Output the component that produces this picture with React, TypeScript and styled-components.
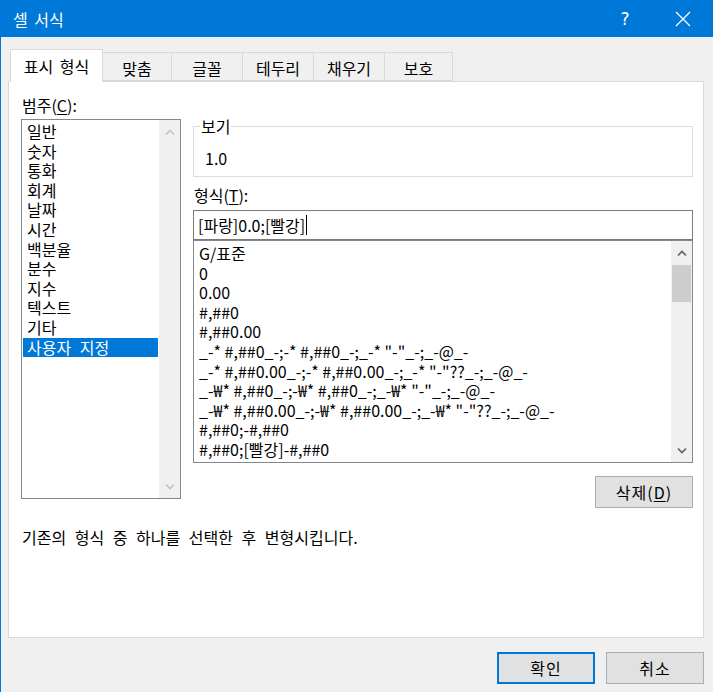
import * as React from 'react';
import styled, { createGlobalStyle } from 'styled-components';

const GlobalStyle = createGlobalStyle`
  html, body {
    margin: 0;
    padding: 0;
    background: #f0f0f0;
  }
  body {
    font-family: "Noto Sans CJK KR", "Noto Sans", sans-serif;
    font-size: 16px;
    color: #000;
  }
`;

const Window = styled.div`
  width: 713px;
  height: 692px;
  box-sizing: border-box;
  display: flex;
  flex-direction: column;
  background: #f0f0f0;
  border-left: 1px solid #0078d7;
  overflow: hidden;
`;

const TitleBar = styled.div`
  height: 37px;
  flex: 0 0 37px;
  display: flex;
  align-items: center;
  background: #0078d7;
  color: #fff;
  padding: 0 15px 0 12px;
`;

const Title = styled.div`
  font-size: 16px;
  line-height: 20px;
  word-spacing: 3px;
`;

const Controls = styled.div`
  margin-left: auto;
  display: flex;
  gap: 28px;
`;

const Control = styled.div`
  width: 30px;
  height: 30px;
  display: flex;
  align-items: center;
  justify-content: center;
  font-family: "DejaVu Sans", sans-serif;
  font-size: 17px;
  color: #fff;
`;

const Body = styled.div`
  flex: 1;
  display: flex;
  flex-direction: column;
  padding: 12px 9px 0 7px;
`;

const TabRow = styled.div`
  display: flex;
  align-items: flex-end;
  height: 32px;
  padding-left: 2px;
  position: relative;
  z-index: 1;
`;

const Tab = styled.div<{ $active?: boolean; $w: number }>`
  box-sizing: border-box;
  width: ${(p) => p.$w}px;
  height: ${(p) => (p.$active ? 33 : 29)}px;
  margin-bottom: ${(p) => (p.$active ? -1 : 0)}px;
  margin-left: -1px;
  display: flex;
  align-items: center;
  justify-content: center;
  padding-top: ${(p) => (p.$active ? 0 : 3)}px;
  background: ${(p) => (p.$active ? '#fff' : '#f0f0f0')};
  border: 1px solid #d9d9d9;
  border-bottom: ${(p) => (p.$active ? 'none' : '1px solid #d9d9d9')};
  line-height: 20px;
  word-spacing: 3px;
  &:first-child {
    margin-left: 0;
  }
`;

const Panel = styled.div`
  height: 557px;
  box-sizing: border-box;
  background: #fff;
  border: 1px solid #d9d9d9;
  padding: 13px 9px 0 12px;
  display: flex;
  flex-direction: column;
`;

const Columns = styled.div`
  display: flex;
  gap: 12px;
`;

const LeftCol = styled.div`
  width: 160px;
  display: flex;
  flex-direction: column;
`;

const RightCol = styled.div`
  width: 500px;
  display: flex;
  flex-direction: column;
  padding-top: 22px;
`;

const Label = styled.div<{ $indent?: number }>`
  line-height: 20px;
  padding-left: ${(p) => p.$indent ?? 0}px;
`;

const Key = styled.span`
  text-decoration: underline;
  text-underline-offset: 2px;
`;

const ListBox = styled.div<{ $h: number; $top?: number }>`
  box-sizing: border-box;
  height: ${(p) => p.$h}px;
  margin-top: ${(p) => p.$top ?? 0}px;
  border: 1px solid #828790;
  background: #fff;
  display: flex;
`;

const Items = styled.div<{ $pad: number }>`
  flex: 1;
  padding: ${(p) => p.$pad}px 1px 0 1px;
  overflow: hidden;
`;

const Item = styled.div<{ $selected?: boolean; $wordGap?: number }>`
  line-height: 19.6px;
  height: 19.6px;
  padding-left: 4px;
  white-space: nowrap;
  word-spacing: ${(p) => p.$wordGap ?? 0}px;
  background: ${(p) => (p.$selected ? '#0078d7' : 'transparent')};
  color: ${(p) => (p.$selected ? '#fff' : '#000')};
`;

const ScrollBar = styled.div`
  width: 21px;
  display: flex;
  flex-direction: column;
  background: #f0f0f0;
`;

const ArrowButton = styled.div<{ $disabled?: boolean }>`
  height: 24px;
  display: flex;
  align-items: center;
  justify-content: center;
  color: ${(p) => (p.$disabled ? '#c2c2c2' : '#606060')};
`;

const Track = styled.div`
  flex: 1;
  display: flex;
  flex-direction: column;
`;

const Thumb = styled.div`
  height: 37px;
  margin: 0 1px;
  background: #cdcdcd;
`;

const Group = styled.fieldset`
  margin: 0;
  padding: 13px 12px 8px 11px;
  border: 1px solid #dcdcdc;
  min-width: 0;
`;

const Legend = styled.legend`
  padding: 0 1px;
  margin-left: -5px;
  line-height: 18px;
`;

const Preview = styled.div`
  line-height: 20px;
`;

const FormatLabel = styled(Label)`
  margin-top: 8px;
  padding-left: 1px;
`;

const Input = styled.div`
  box-sizing: border-box;
  height: 30px;
  margin-top: 5px;
  border: 1px solid #7a7a7a;
  background: #fff;
  display: flex;
  align-items: center;
  padding-left: 4px;
  line-height: 20px;
`;

const Caret = styled.span`
  display: inline-block;
  width: 1px;
  height: 20px;
  background: #000;
  margin-left: 1px;
  vertical-align: middle;
`;

const ButtonRow = styled.div<{ $top: number }>`
  display: flex;
  justify-content: flex-end;
  gap: 11px;
  margin-top: ${(p) => p.$top}px;
`;

const Button = styled.div<{ $default?: boolean }>`
  box-sizing: border-box;
  width: 98px;
  height: 32px;
  display: flex;
  align-items: center;
  justify-content: center;
  background: #e1e1e1;
  border: ${(p) => (p.$default ? '2px solid #0078d7' : '1px solid #adadad')};
  line-height: 20px;
  letter-spacing: 1px;
`;

const Description = styled.div`
  margin-top: 19px;
  padding-left: 1px;
  line-height: 20px;
  word-spacing: 5px;
`;

const Chevron = ({ down }: { down?: boolean }) => (
  <svg width="10" height="7" viewBox="0 0 10 7">
    <path
      d={down ? 'M1 1.5 L5 5.5 L9 1.5' : 'M1 5.5 L5 1.5 L9 5.5'}
      fill="none"
      stroke="currentColor"
      strokeWidth="1.6"
    />
  </svg>
);

const CloseIcon = () => (
  <svg width="16" height="16" viewBox="0 0 16 16">
    <path d="M1 1 L15 15 M15 1 L1 15" stroke="#fff" strokeWidth="1.3" fill="none" />
  </svg>
);

const tabs = [
  { label: '표시 형식', w: 93 },
  { label: '맞춤', w: 70 },
  { label: '글꼴', w: 72 },
  { label: '테두리', w: 72 },
  { label: '채우기', w: 72 },
  { label: '보호', w: 69 },
];

const categories = [
  '일반',
  '숫자',
  '통화',
  '회계',
  '날짜',
  '시간',
  '백분율',
  '분수',
  '지수',
  '텍스트',
  '기타',
  '사용자 지정',
];

const formats = [
  'G/표준',
  '0',
  '0.00',
  '#,##0',
  '#,##0.00',
  '_-* #,##0_-;-* #,##0_-;_-* "-"_-;_-@_-',
  '_-* #,##0.00_-;-* #,##0.00_-;_-* "-"??_-;_-@_-',
  '_-₩* #,##0_-;-₩* #,##0_-;_-₩* "-"_-;_-@_-',
  '_-₩* #,##0.00_-;-₩* #,##0.00_-;_-₩* "-"??_-;_-@_-',
  '#,##0;-#,##0',
  '#,##0;[빨강]-#,##0',
];

export default function App() {
  return (
    <Window>
      <GlobalStyle />
      <TitleBar>
        <Title>셀 서식</Title>
        <Controls>
          <Control>?</Control>
          <Control>
            <CloseIcon />
          </Control>
        </Controls>
      </TitleBar>
      <Body>
        <TabRow>
          {tabs.map((t, i) => (
            <Tab key={t.label} $active={i === 0} $w={t.w}>
              {t.label}
            </Tab>
          ))}
        </TabRow>
        <Panel>
          <Columns>
            <LeftCol>
              <Label $indent={1}>
                범주(<Key>C</Key>):
              </Label>
              <ListBox $h={380} $top={4}>
                <Items $pad={2}>
                  {categories.map((c, i) => (
                    <Item key={c} $wordGap={5} $selected={i === categories.length - 1}>
                      {c}
                    </Item>
                  ))}
                </Items>
                <ScrollBar>
                  <ArrowButton $disabled>
                    <Chevron />
                  </ArrowButton>
                  <Track />
                  <ArrowButton $disabled>
                    <Chevron down />
                  </ArrowButton>
                </ScrollBar>
              </ListBox>
            </LeftCol>
            <RightCol>
              <Group>
                <Legend>보기</Legend>
                <Preview>1.0</Preview>
              </Group>
              <FormatLabel>
                형식(<Key>T</Key>):
              </FormatLabel>
              <Input>
                [파랑]0.0;[빨강]
                <Caret />
              </Input>
              <ListBox $h={223}>
                <Items $pad={3}>
                  {formats.map((f) => (
                    <Item key={f}>{f}</Item>
                  ))}
                </Items>
                <ScrollBar>
                  <ArrowButton>
                    <Chevron />
                  </ArrowButton>
                  <Track>
                    <Thumb />
                  </Track>
                  <ArrowButton>
                    <Chevron down />
                  </ArrowButton>
                </ScrollBar>
              </ListBox>
              <ButtonRow $top={13}>
                <Button>
                  삭제(<Key>D</Key>)
                </Button>
              </ButtonRow>
            </RightCol>
          </Columns>
          <Description>기존의 형식 중 하나를 선택한 후 변형시킵니다.</Description>
        </Panel>
        <ButtonRow $top={14}>
          <Button $default>확인</Button>
          <Button>취소</Button>
        </ButtonRow>
      </Body>
    </Window>
  );
}
